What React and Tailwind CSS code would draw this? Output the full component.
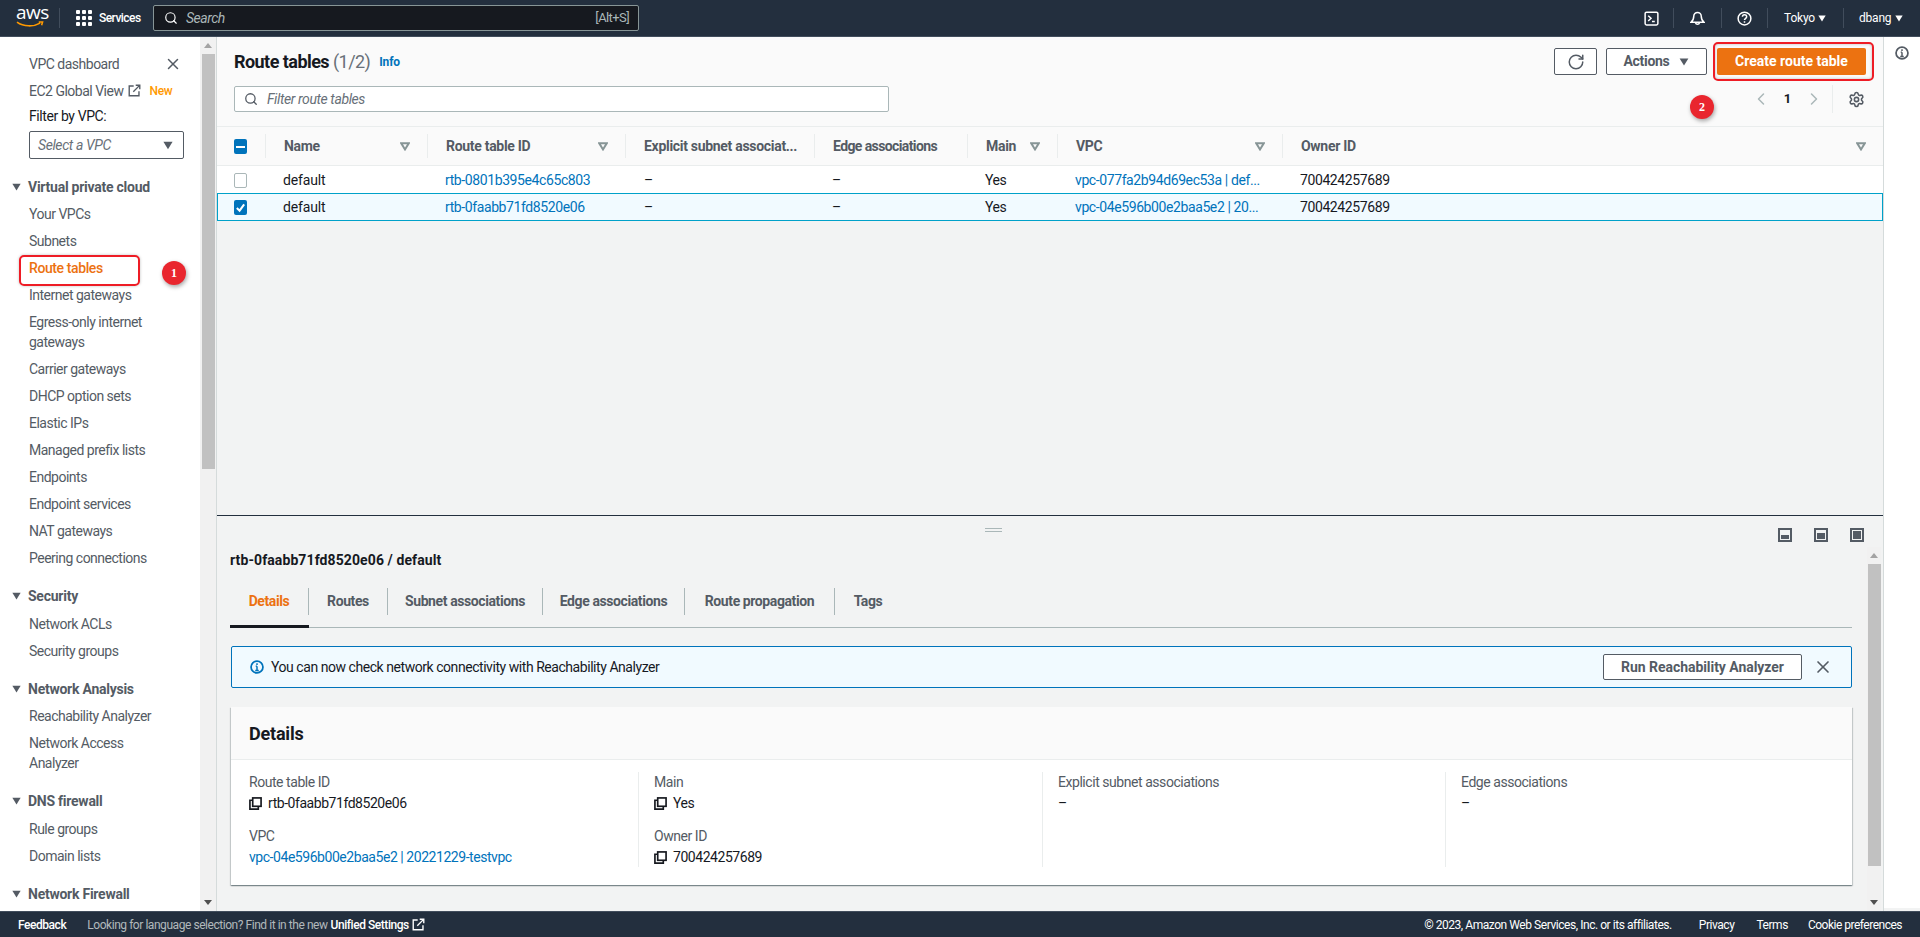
import { ChevronLeft, ChevronRight, Search, Settings, RotateCw, X } from 'lucide-react';

const Caret = ({ className = '' }) => (
  <svg viewBox="0 0 12 10" className={className} fill="currentColor"><path d="M0.5 0.5h11L6 9.5z" /></svg>
);

const SortCaret = () => (
  <svg viewBox="0 0 12 10" className="w-[10px] h-[9px] text-[#879596]" fill="none" stroke="currentColor" strokeWidth="2.4"><path d="M1.5 1.2h9L6 8.5z" /></svg>
);

const ExternalIcon = ({ className = '' }) => (
  <svg viewBox="0 0 16 16" className={className} fill="none" stroke="currentColor" strokeWidth="1.7">
    <path d="M7 2.5H1.500v12h12V9" />
    <path d="M6.500 9.500L14 2M9.500 1.500h5v5" />
  </svg>
);

const CopyIcon = () => (
  <svg viewBox="0 0 14 14" className="w-[13px] h-[13px] shrink-0 text-[#16191f]" fill="none" stroke="currentColor" strokeWidth="1.8">
    <rect x="4" y="1" width="9" height="9" />
    <path d="M4 3.500H1V13h9v-3" />
  </svg>
);

const InfoIcon = ({ className = '' }) => (
  <svg viewBox="0 0 16 16" className={className} fill="none" stroke="currentColor" strokeWidth="2">
    <circle cx="8" cy="8" r="6.800" />
    <path d="M8 7v5M6 12h4M6.500 7H8M8 3.600v2" strokeWidth="1.7" />
  </svg>
);

// the three split panel size buttons, only the inner block differs
const PanelIcon = ({ y, h }) => (
  <svg viewBox="0 0 14 14" className="w-[14px] h-[14px]">
    <rect x="1" y="1" width="12" height="12" fill="#f2f3f3" stroke="#545b64" strokeWidth="2" />
    <rect x="3" y={y} width="8" height={h} fill="#545b64" />
  </svg>
);

function Link({ children, className = '' }) {
  return <a className={`text-[#0073bb] ${className}`}>{children}</a>;
}

function Checkbox({ state }) {
  if (state === 'off') {
    return <span className="block w-[13px] h-[15px] bg-white border border-[#aab7b8] rounded-[2px]" />;
  }
  return (
    <span className="flex items-center justify-center w-[13px] h-[15px] bg-[#0073bb] rounded-[2px]">
      {state === 'mixed' ? (
        <span className="w-[9px] h-[2px] bg-white" />
      ) : (
        <svg viewBox="0 0 12 12" className="w-[11px] h-[11px]" fill="none" stroke="white" strokeWidth="2.2"><path d="M2 6.500l3 3 5-7" /></svg>
      )}
    </span>
  );
}

function TopNav() {
  return (
    <header className="h-[37px] shrink-0 flex items-center bg-[#232f3e] border-b border-[#414d5c] text-white">
      <div className="w-[59px] h-full pl-[16px] pt-[3px] relative">
        <div className="text-[19px] leading-[19px] font-medium tracking-[-0.5px] font-['Open_Sans',sans-serif]">aws</div>
        <svg viewBox="0 0 30 8" className="w-[29px] h-[8px] -mt-[1px] text-[#ff9900]" fill="none" stroke="currentColor" strokeWidth="1.6">
          <path d="M1 1c7 5 17 5 24 1M23.500 .8h4l-1 3.500" />
        </svg>
      </div>
      <span className="w-px h-[20px] bg-[#414d5c]" />
      <div className="grid grid-cols-3 gap-[2px] ml-[16px]">
        {[0, 1, 2, 3, 4, 5, 6, 7, 8].map((i) => <span key={i} className="w-[4px] h-[4px] bg-white rounded-[1px]" />)}
      </div>
      <span className="ml-[7px] w-[41px] text-[12px] font-medium tracking-[-0.55px] whitespace-nowrap">Services</span>
      <div className="ml-[13px] w-[486px] h-[26px] flex items-center bg-[#16191f] border border-[#879596] rounded-[2px] pl-[10px] pr-[9px] text-[14px] text-[#aab7b8]">
        <Search className="w-[14px] h-[14px] text-white" strokeWidth={2} />
        <span className="ml-[8px] italic tracking-[-0.5px]">Search</span>
        <span className="ml-auto text-[13px] tracking-[-0.6px]">[Alt+S]</span>
      </div>
      <div className="ml-auto flex items-center h-full">
        <svg viewBox="0 0 16 16" className="w-[15px] h-[15px] mr-[14px]" fill="none" stroke="white" strokeWidth="1.6">
          <rect x="1.200" y="1.200" width="13.600" height="13.600" rx="1.500" />
          <path d="M4.500 5l3 2.800-3 2.800M8.500 11.200h3" />
        </svg>
        <span className="w-px h-[20px] bg-[#414d5c]" />
        <svg viewBox="0 0 16 16" className="w-[15px] h-[15px] mx-[16px]" fill="none" stroke="white" strokeWidth="1.6">
          <path d="M8 1.500a4 4 0 0 0-4 4c0 3-1 5-3 6.500h14c-2-1.500-3-3.500-3-6.500a4 4 0 0 0-4-4z" />
          <path d="M5.800 12.500a2.300 2.300 0 0 0 4.400 0" />
        </svg>
        <span className="w-px h-[20px] bg-[#414d5c]" />
        <svg viewBox="0 0 16 16" className="w-[15px] h-[15px] mx-[15px]" fill="none" stroke="white" strokeWidth="1.6">
          <circle cx="8" cy="8" r="6.800" />
          <path d="M5.800 6.200c0-3 4.500-3 4.500-.2 0 1.800-2.300 1.800-2.300 3.700M8 11v1.500" />
        </svg>
        <span className="w-px h-[20px] bg-[#414d5c]" />
        <span className="ml-[16px] w-[30px] text-[12px] tracking-[-0.2px]">Tokyo</span>
        <Caret className="w-[8px] h-[7px] ml-[4px] mr-[17px]" />
        <span className="w-px h-[20px] bg-[#414d5c]" />
        <span className="ml-[15px] w-[31px] text-[12px] tracking-[-0.2px]">dbang</span>
        <Caret className="w-[8px] h-[7px] ml-[5px] mr-[17px]" />
      </div>
    </header>
  );
}

function NavLink({ children, active }) {
  return (
    <a className={`block py-[3.5px] pl-[29px] pr-[40px] text-[14px] leading-5 ${active ? 'text-[#ec7211] font-medium tracking-[-0.4px]' : 'text-[#545b64] tracking-[-0.5px]'}`}>
      {children}
    </a>
  );
}

function NavSection({ title, items }) {
  return (
    <div className="mt-[11px]">
      <div className="flex items-center pt-[3.5px] pb-[4px] pl-[12px] text-[14px] leading-5 font-bold text-[#545b64] tracking-[-0.25px]">
        <Caret className="w-[9px] h-[8px] mr-[7px] text-[#545b64]" />
        {title}
      </div>
      {items.map((item) => (
        <NavLink key={item} active={item === 'Route tables'}>{item}</NavLink>
      ))}
    </div>
  );
}

function Sidebar() {
  return (
    <aside className="w-[200px] shrink-0 bg-white relative overflow-hidden pt-[13px]">
      <NavLink>VPC dashboard</NavLink>
      <X className="absolute left-[164px] top-[18px] w-[18px] h-[18px] text-[#545b64]" strokeWidth={2} />
      <div className="flex items-center py-[3.5px] pl-[29px] text-[14px] leading-5 text-[#545b64] tracking-[-0.5px]">
        EC2 Global View
        <ExternalIcon className="w-[13px] h-[13px] ml-[5px]" />
        <span className="ml-[8px] text-[12px] font-medium text-[#ff9900] tracking-[-0.3px]">New</span>
      </div>
      <div className="pl-[29px] pt-[2px] pb-[5px] text-[14px] leading-5 text-[#16191f] tracking-[-0.4px]">Filter by VPC:</div>
      <div className="ml-[29px] w-[155px] h-[28px] flex items-center justify-between border border-[#545b64] rounded-[2px] pl-[8px] pr-[10px] text-[14px] italic text-[#687078] tracking-[-0.4px]">
        Select a VPC
        <Caret className="w-[10px] h-[9px] text-[#545b64]" />
      </div>
      <div className="h-[3px]" />
      <NavSection
        title="Virtual private cloud"
        items={['Your VPCs', 'Subnets', 'Route tables', 'Internet gateways', 'Egress-only internet gateways', 'Carrier gateways', 'DHCP option sets', 'Elastic IPs', 'Managed prefix lists', 'Endpoints', 'Endpoint services', 'NAT gateways', 'Peering connections']}
      />
      <NavSection title="Security" items={['Network ACLs', 'Security groups']} />
      <NavSection title="Network Analysis" items={['Reachability Analyzer', 'Network Access Analyzer']} />
      <NavSection title="DNS firewall" items={['Rule groups', 'Domain lists']} />
      <NavSection title="Network Firewall" items={[]} />
      {/* annotation from the screenshot */}
      <div className="absolute left-[19px] top-[218px] w-[121px] h-[31px] border-2 border-[#ee1c25] rounded-[5px] shadow-[0_0_3px_rgba(0,0,0,0.25)]" />
      <Badge className="left-[162px] top-[224px]">1</Badge>
    </aside>
  );
}

function Badge({ children, className = '' }) {
  return (
    <span className={`absolute w-[24px] h-[24px] rounded-full bg-[#e9262e] shadow-[1px_2px_4px_rgba(0,0,0,0.35)] flex items-center justify-center text-[12px] font-bold text-white font-['Liberation_Serif',serif] ${className}`}>
      {children}
    </span>
  );
}

function Scrollbar({ thumbHeight, track }) {
  return (
    <div className={`shrink-0 flex flex-col items-center bg-[#f1f1f1] ${track}`}>
      <svg viewBox="0 0 8 5" className="w-[8px] h-[5px] mt-[6px] text-[#a3a3a3]" fill="currentColor"><path d="M4 0l4 5H0z" /></svg>
      <div className={`w-[13px] mt-[6px] bg-[#c1c1c1] ${thumbHeight}`} />
      <svg viewBox="0 0 8 5" className="w-[8px] h-[5px] mt-auto mb-[6px] text-[#505050]" fill="currentColor"><path d="M4 5L0 0h8z" /></svg>
    </div>
  );
}

const columns = [
  { label: 'Name', sort: true },
  { label: 'Route table ID', sort: true },
  { label: 'Explicit subnet associat...' },
  { label: 'Edge associations', tight: true },
  { label: 'Main', sort: true },
  { label: 'VPC', sort: true },
  { label: 'Owner ID', sort: true },
];

const rows = [
  { id: 'rtb-0801b395e4c65c803', vpc: 'vpc-077fa2b94d69ec53a | def...', selected: false },
  { id: 'rtb-0faabb71fd8520e06', vpc: 'vpc-04e596b00e2baa5e2 | 20...', selected: true },
];

const gridCols = 'grid grid-cols-[48px_162px_198px_189px_153px_90px_225px_1fr]';

function RouteTable() {
  return (
    <div className="text-[14px]">
      <div className={`${gridCols} h-[39px] items-center bg-[#fafafa] border-b border-[#eaeded]`}>
        <div className="pl-[17px] pt-[1px]"><Checkbox state="mixed" /></div>
        {columns.map((col) => (
          <div key={col.label} className={`h-[24px] flex items-center justify-between pl-[18px] pr-[17px] border-l border-[#eaeded] font-bold text-[#545b64] whitespace-nowrap ${col.tight ? 'tracking-[-0.6px]' : 'tracking-[-0.3px]'}`}>
            {col.label}
            {col.sort && <SortCaret />}
          </div>
        ))}
      </div>
      {rows.map((row) => (
        <div
          key={row.id}
          className={`${gridCols} items-center text-[#16191f] tracking-[-0.4px] whitespace-nowrap ${row.selected ? 'h-[28px] bg-[#f1faff] outline outline-[#00a1c9] -outline-offset-1' : 'h-[27px] pt-px bg-white'}`}
        >
          <div className="pl-[17px]"><Checkbox state={row.selected ? 'on' : 'off'} /></div>
          <div className="pl-[18px] tracking-[-0.15px]">default</div>
          <div className="pl-[18px]"><Link>{row.id}</Link></div>
          <div className="pl-[19px]">–</div>
          <div className="pl-[18px]">–</div>
          <div className="pl-[18px]">Yes</div>
          <div className="pl-[18px]"><Link>{row.vpc}</Link></div>
          <div className="pl-[18px]">700424257689</div>
        </div>
      ))}
    </div>
  );
}

function TablePanel() {
  return (
    <section className="h-[478px] shrink-0 bg-[#f2f3f3] flex flex-col">
      <div className="relative h-[90px] bg-[#fafafa] pt-[11px] pl-[17px] pr-[17px] border-b border-[#eaeded]">
        <div className="flex items-center h-[27px]">
          <h1 className="text-[18px] font-bold text-[#16191f] tracking-[-0.55px] -mt-[1px]">
            Route tables <span className="font-normal text-[#687078]">(1/2)</span>
          </h1>
          <Link className="ml-[9px] text-[12px] font-bold tracking-[-0.2px]">Info</Link>
          <button className="ml-auto w-[43px] h-[27px] flex items-center justify-center bg-white border border-[#545b64] rounded-[2px] text-[#545b64]">
            <RotateCw className="w-[18px] h-[18px]" strokeWidth={2} />
          </button>
          <button className="ml-[9px] w-[101px] h-[27px] flex items-center justify-center gap-[10px] bg-white border border-[#545b64] rounded-[2px] text-[14px] font-bold text-[#545b64] tracking-[-0.3px]">
            Actions <Caret className="w-[10px] h-[8px]" />
          </button>
          <button className="ml-[10px] w-[149px] h-[27px] bg-[#ec7211] rounded-[2px] text-[14px] font-bold text-white">Create route table</button>
        </div>
        <div className="flex items-center mt-[11px] h-[26px]">
          <div className="w-[655px] h-[26px] flex items-center bg-white border border-[#aab7b8] rounded-[2px] pl-[9px] text-[14px] italic text-[#687078] tracking-[-0.4px]">
            <Search className="w-[14px] h-[14px] text-[#545b64] mr-[9px]" strokeWidth={2.2} />
            Filter route tables
          </div>
          <div className="ml-auto flex items-center h-[28px]">
            <ChevronLeft className="w-[20px] h-[20px] text-[#aab7b8]" strokeWidth={1.8} />
            <span className="w-[33px] text-center text-[13px] font-bold text-[#16191f]">1</span>
            <ChevronRight className="w-[20px] h-[20px] text-[#aab7b8]" strokeWidth={1.8} />
            <span className="ml-[8px] w-px h-[28px] bg-[#eaeded]" />
            <Settings className="ml-[15px] mr-[1px] w-[17px] h-[17px] text-[#545b64]" strokeWidth={2.2} />
          </div>
        </div>
        {/* annotation from the screenshot */}
        <div className="absolute left-[1496px] top-[5px] w-[161px] h-[39px] border-2 border-[#ee1c25] rounded-[5px] shadow-[inset_0_0_3px_rgba(0,0,0,0.25)]" />
        <Badge className="left-[1473px] top-[58px]">2</Badge>
      </div>
      <RouteTable />
    </section>
  );
}

const tabs = [
  { label: 'Details', width: 'w-[79px]', active: true },
  { label: 'Routes', width: 'w-[79px]' },
  { label: 'Subnet associations', width: 'w-[155px]' },
  { label: 'Edge associations', width: 'w-[142px]' },
  { label: 'Route propagation', width: 'w-[150px]' },
  { label: 'Tags', width: 'w-[66px]', last: true },
];

function Field({ label, children, copy }) {
  return (
    <div>
      <div className="text-[14px] leading-5 text-[#545b64] tracking-[-0.45px] mb-px">{label}</div>
      <div className="flex items-center gap-[6px] text-[14px] leading-5 text-[#16191f] tracking-[-0.45px]">
        {copy && <CopyIcon />}
        {children}
      </div>
    </div>
  );
}

function DetailsCard() {
  return (
    <div className="mt-[19px] ml-px bg-white shadow-[0_1px_1px_0_rgba(0,28,36,0.3),1px_1px_1px_0_rgba(0,28,36,0.15),-1px_1px_1px_0_rgba(0,28,36,0.15)]">
      <div className="h-[53px] flex items-center pl-[18px] bg-[#fafafa] border-b border-[#eaeded] text-[18px] font-bold text-[#16191f] tracking-[-0.2px]">Details</div>
      <div className="grid grid-cols-[407px_404px_403px_1fr] pt-[12px] pb-[19px] h-[125px]">
        <div className="pl-[18px] flex flex-col gap-[13px]">
          <Field label="Route table ID" copy>rtb-0faabb71fd8520e06</Field>
          <Field label="VPC"><Link>vpc-04e596b00e2baa5e2 | 20221229-testvpc</Link></Field>
        </div>
        <div className="pl-[15px] border-l border-[#eaeded] flex flex-col gap-[13px]">
          <Field label="Main" copy>Yes</Field>
          <Field label="Owner ID" copy>700424257689</Field>
        </div>
        <div className="pl-[15px] border-l border-[#eaeded]"><Field label="Explicit subnet associations">–</Field></div>
        <div className="pl-[15px] border-l border-[#eaeded]"><Field label="Edge associations">–</Field></div>
      </div>
    </div>
  );
}

function SplitPanel() {
  return (
    <section className="flex-1 min-h-0 flex flex-col bg-[#f2f3f3] border-t border-[#232f3e]">
      <div className="relative h-[31px] shrink-0 flex items-center justify-end gap-[22px] pr-[19px] pt-[6px]">
        <div className="absolute left-[768px] top-[12px] w-[17px] h-[4px] border-y border-[#aab7b8]" />
        <PanelIcon y={7} h={4} />
        <PanelIcon y={5} h={6} />
        <PanelIcon y={3} h={8} />
      </div>
      <div className="flex-1 min-h-0 flex pr-[2px]">
        <div className="flex-1 min-w-0 pl-[13px] pr-[15px] pt-[3px] overflow-hidden">
          <h2 className="text-[14px] leading-5 font-bold text-[#16191f] tracking-[0.1px]">rtb-0faabb71fd8520e06 / default</h2>
          <div className="mt-[8px] h-[50px] flex items-start border-b border-[#aab7b8] relative">
            {tabs.map((tab) => (
              <div key={tab.label} className={`${tab.width} mt-[10px] h-[27px] flex items-center justify-center text-[14px] font-bold tracking-[-0.4px] whitespace-nowrap ${tab.last ? '' : 'border-r border-[#aab7b8]'} ${tab.active ? 'text-[#ec7211]' : 'text-[#545b64]'}`}>
                {tab.label}
              </div>
            ))}
            <span className="absolute left-0 -bottom-px w-[79px] h-[3px] bg-[#16191f]" />
          </div>
          <div className="mt-[18px] ml-px h-[42px] flex items-center bg-[#f1faff] border border-[#0073bb] rounded-[2px] pl-[18px] pr-[18px] text-[14px] text-[#16191f] tracking-[-0.45px]">
            <InfoIcon className="w-[14px] h-[14px] text-[#0073bb] mr-[7px]" />
            You can now check network connectivity with Reachability Analyzer
            <button className="ml-auto w-[199px] h-[26px] bg-white border border-[#545b64] rounded-[2px] font-bold text-[#545b64] tracking-[-0.05px]">Run Reachability Analyzer</button>
            <X className="ml-[11px] w-[20px] h-[20px] text-[#545b64]" strokeWidth={2} />
          </div>
          <DetailsCard />
        </div>
        <Scrollbar thumbHeight="h-[302px]" track="w-[14px]" />
      </div>
    </section>
  );
}

function Footer() {
  return (
    <footer className="h-[26px] shrink-0 flex items-center bg-[#232f3e] border-t border-[#414d5c] text-[12px] tracking-[-0.45px] text-white">
      <span className="ml-[18px] font-medium">Feedback</span>
      <span className="ml-[21px] text-[#d5dbdb] opacity-80">Looking for language selection? Find it in the new</span>
      <span className="ml-[3px] font-medium">Unified Settings</span>
      <ExternalIcon className="w-[13px] h-[13px] ml-[3px]" />
      <span className="ml-auto">© 2023, Amazon Web Services, Inc. or its affiliates.</span>
      <span className="ml-[27px]">Privacy</span>
      <span className="ml-[22px]">Terms</span>
      <span className="ml-[20px] mr-[18px] tracking-[-0.5px]">Cookie preferences</span>
    </footer>
  );
}

export default function App() {
  return (
    <div className="h-[937px] w-[1920px] overflow-hidden flex flex-col font-['Roboto',sans-serif]">
      <TopNav />
      <div className="flex-1 min-h-0 flex bg-[#f2f3f3]">
        <Sidebar />
        <Scrollbar thumbHeight="h-[415px]" track="w-[16px]" />
        <main className="w-[1668px] shrink-0 flex flex-col border-x border-[#d5dbdb]">
          <TablePanel />
          <SplitPanel />
        </main>
        <div className="flex-1 mb-[3px] bg-white flex justify-center pt-[9px]">
          <InfoIcon className="w-[14px] h-[14px] text-[#545b64]" />
        </div>
      </div>
      <Footer />
    </div>
  );
}
